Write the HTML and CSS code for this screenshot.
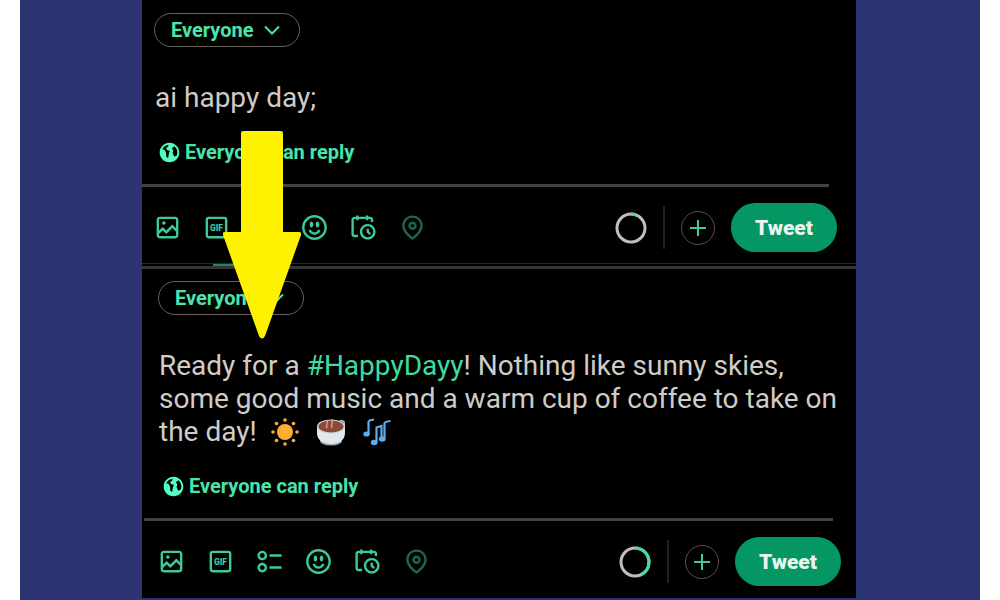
FILE: index.html
```
<!DOCTYPE html>
<html lang="en">

<head>
    <meta charset="UTF-8">
    <meta name="viewport" content="width=device-width, initial-scale=1.0">
    <title>Tweet Composer</title>
    <link rel="stylesheet" href="styles.css">
</head>

<body>

    <!-- shared icons -->
    <svg class="sprite" aria-hidden="true">
        <symbol id="icon-chevron" viewBox="0 0 16 16">
            <path d="M1 4.500l7 7 7-7" fill="none" stroke="currentColor" stroke-width="2" />
        </symbol>
        <symbol id="icon-globe" viewBox="0 0 24 24">
            <path d="M12 1.750C6.340 1.750 1.750 6.340 1.750 12S6.340 22.250 12 22.250 22.250 17.660 22.250 12 17.660 1.750 12 1.750zM11.500 12.500L10.500 18l-2-2v-3.500L7 9.500 4.500 8.500C6 5.500 8.500 4 11 3.800L10.500 6 8.700 7l.3 2 3.500 1.500zM17 16.500l-1.800-4L16 10l-1.500-2.500 2.500-2c2 1.500 3.200 3.800 3.200 6.500 0 1-.2 2-.6 3z" />
        </symbol>
        <symbol id="icon-image" viewBox="0 0 24 24">
            <path d="M3 5.500C3 4.119 4.119 3 5.500 3h13C19.881 3 21 4.119 21 5.500v13c0 1.381-1.119 2.500-2.500 2.500h-13C4.119 21 3 19.881 3 18.500v-13zM5.500 5c-.276 0-.5.224-.5.5v9.086l3-3 3 3 5-5 3 3V5.500c0-.276-.224-.5-.5-.5h-13zM19 15.414l-3-3-5 5-3-3-3 3V18.500c0 .276.224.5.5.5h13c.276 0 .5-.224.5-.5v-3.086z" />
            <circle cx="9" cy="8.300" r="1.500" />
        </symbol>
        <symbol id="icon-gif" viewBox="0 0 24 24">
            <rect x="4" y="4" width="16" height="16" rx="1.500" fill="none" stroke="currentColor" stroke-width="2" />
            <text x="12" y="14.500" text-anchor="middle" class="gif-text">GIF</text>
        </symbol>
        <symbol id="icon-poll" viewBox="0 0 24 24">
            <path d="M6 5c-1.100 0-2 .895-2 2s.9 2 2 2 2-.895 2-2-.9-2-2-2zM2 7c0-2.209 1.790-4 4-4s4 1.791 4 4-1.790 4-4 4-4-1.791-4-4zm20 1H12V6h10v2zM6 15c-1.100 0-2 .895-2 2s.9 2 2 2 2-.895 2-2-.9-2-2-2zm-4 2c0-2.209 1.790-4 4-4s4 1.791 4 4-1.790 4-4 4-4-1.791-4-4zm20 1H12v-2h10v2z" />
        </symbol>
        <symbol id="icon-emoji" viewBox="0 0 24 24">
            <path d="M8 9.500C8 8.119 8.672 7 9.500 7S11 8.119 11 9.500 10.328 12 9.500 12 8 10.881 8 9.500zm6.500 2.500c.828 0 1.500-1.119 1.500-2.500S15.328 7 14.500 7 13 8.119 13 9.500s.672 2.500 1.500 2.500zM12 16c-2.224 0-3.021-2.227-3.051-2.316l-1.897.633c.05.15 1.271 3.684 4.949 3.684s4.898-3.533 4.949-3.684l-1.896-.638c-.033.095-.83 2.322-3.053 2.322zm10.250-4.001c0 5.652-4.598 10.250-10.250 10.250S1.750 17.652 1.750 12 6.348 1.750 12 1.750 22.250 6.348 22.250 12zm-2 0c0-4.549-3.701-8.250-8.250-8.250S3.750 7.451 3.750 12s3.701 8.250 8.250 8.250 8.250-3.701 8.250-8.250z" />
        </symbol>
        <symbol id="icon-schedule" viewBox="0 0 24 24">
            <path d="M6 3V2h2v1h6V2h2v1h1.500C18.880 3 20 4.119 20 5.500v2h-2v-2c0-.276-.22-.5-.5-.5H16v1h-2V5H8v1H6V5H4.500c-.28 0-.5.224-.5.5v12c0 .276.22.5.5.5h3v2h-3C3.120 20 2 18.881 2 17.500v-12C2 4.119 3.120 3 4.500 3H6zm9.500 8c-2.490 0-4.500 2.015-4.500 4.500s2.010 4.500 4.500 4.500 4.500-2.015 4.500-4.500-2.010-4.500-4.500-4.500zM9 15.500C9 11.910 11.910 9 15.500 9s6.500 2.910 6.500 6.500-2.910 6.500-6.500 6.500S9 19.090 9 15.500zm5.500-2.500h2v2.086l1.710 1.707-1.420 1.414-2.290-2.293V13z" />
        </symbol>
        <symbol id="icon-location" viewBox="0 0 24 24">
            <path d="M12 7c-1.930 0-3.500 1.570-3.500 3.500S10.070 14 12 14s3.500-1.570 3.500-3.500S13.930 7 12 7zm0 5c-.827 0-1.500-.673-1.500-1.500S11.173 9 12 9s1.500.673 1.500 1.500S12.827 12 12 12zm0-10c-4.687 0-8.500 3.813-8.500 8.500 0 5.967 7.621 11.116 7.945 11.332l.555.37.555-.37c.324-.216 7.945-5.365 7.945-11.332C20.500 5.813 16.687 2 12 2zm0 17.770c-1.665-1.241-6.500-5.196-6.500-9.270C5.500 6.916 8.416 4 12 4s6.500 2.916 6.500 6.500c0 4.073-4.835 8.028-6.500 9.270z" />
        </symbol>
        <symbol id="icon-plus" viewBox="0 0 16 16">
            <path d="M8 0v16M0 8h16" fill="none" stroke="currentColor" stroke-width="2" />
        </symbol>
    </svg>

    <main class="stage">
        <div class="panel">

            <form class="composer">
                <button type="button" class="audience">Everyone <svg class="chevron"><use href="#icon-chevron" /></svg></button>
                <div class="tweet-text" contenteditable="true" role="textbox" aria-label="Tweet text" spellcheck="false">ai happy day;</div>
                <button type="button" class="reply"><svg class="globe"><use href="#icon-globe" /></svg>Everyone can reply</button>
                <hr class="divider">
                <div class="toolbar">
                    <button type="button" class="tool" aria-label="Media"><svg><use href="#icon-image" /></svg></button>
                    <button type="button" class="tool" aria-label="GIF"><svg><use href="#icon-gif" /></svg></button>
                    <button type="button" class="tool" aria-label="Poll"><svg><use href="#icon-poll" /></svg></button>
                    <button type="button" class="tool" aria-label="Emoji"><svg><use href="#icon-emoji" /></svg></button>
                    <button type="button" class="tool" aria-label="Schedule"><svg><use href="#icon-schedule" /></svg></button>
                    <button type="button" class="tool" aria-label="Location" disabled><svg><use href="#icon-location" /></svg></button>
                    <div class="actions">
                        <svg class="counter" viewBox="0 0 32 32">
                            <circle class="counter-track" cx="16" cy="16" r="14" />
                            <circle class="counter-value" cx="16" cy="16" r="14" pathLength="100" stroke-dasharray="6 94" />
                        </svg>
                        <span class="separator"></span>
                        <button type="button" class="add" aria-label="Add tweet"><svg><use href="#icon-plus" /></svg></button>
                        <button type="button" class="tweet">Tweet</button>
                    </div>
                </div>
            </form>

            <div class="tab-line"><span class="tab-active"></span></div>

            <form class="composer composer-result">
                <button type="button" class="audience">Everyone <svg class="chevron"><use href="#icon-chevron" /></svg></button>
                <div class="tweet-text" contenteditable="true" role="textbox" aria-label="Tweet text" spellcheck="false">Ready for a <span class="hashtag">#HappyDayy</span>! Nothing like sunny skies, some good music and a warm cup of coffee to take on the day!
                    <svg class="emoji" viewBox="0 0 28 28" role="img" aria-label="sun">
                        <circle cx="14" cy="14" r="8" fill="#ffac33" />
                        <g fill="#ffac33">
                            <circle cx="14" cy="2" r="1.800" /><circle cx="14" cy="26" r="1.800" />
                            <circle cx="2" cy="14" r="1.800" /><circle cx="26" cy="14" r="1.800" />
                            <circle cx="5.500" cy="5.500" r="1.800" /><circle cx="22.500" cy="5.500" r="1.800" />
                            <circle cx="5.500" cy="22.500" r="1.800" /><circle cx="22.500" cy="22.500" r="1.800" />
                        </g>
                    </svg>
                    <svg class="emoji" viewBox="0 0 28 28" role="img" aria-label="coffee">
                        <path d="M21 5c3-4 7-2 6.500 2S25 14 21 15" fill="none" stroke="#99aab5" stroke-width="2" />
                        <ellipse cx="14" cy="23" rx="11" ry="4.500" fill="#99aab5" />
                        <path d="M0 8v7c0 7 6 11 14 11s14-4 14-11V8z" fill="#e1e8ed" />
                        <ellipse cx="14" cy="8.500" rx="14" ry="7" fill="#ccd6dd" />
                        <ellipse cx="14" cy="8.500" rx="12.500" ry="6" fill="#8a4b38" />
                        <path d="M10 10c-2-3 2-4 0-8M15 10c-2-4 2-5 0-9" fill="none" stroke="#d99e82" stroke-width="1.500" />
                    </svg>
                    <svg class="emoji" viewBox="0 0 28 28" role="img" aria-label="music notes">
                        <g fill="none" stroke="#5dadec" stroke-width="2.200">
                            <path d="M5.500 16V3.500c1-1.500 3-1.500 5.500-2" />
                            <path d="M13.500 24V9.500l5-1.500v12" />
                            <path d="M21.500 21V5c1-1.500 3-1.500 6-2" />
                        </g>
                        <g fill="#5dadec">
                            <ellipse cx="3.500" cy="16" rx="3.200" ry="2.600" />
                            <ellipse cx="11.200" cy="24.500" rx="3.400" ry="2.700" />
                            <ellipse cx="19.200" cy="21" rx="3.400" ry="2.700" />
                        </g>
                    </svg>
                </div>
                <button type="button" class="reply"><svg class="globe"><use href="#icon-globe" /></svg>Everyone can reply</button>
                <hr class="divider">
                <div class="toolbar">
                    <button type="button" class="tool" aria-label="Media"><svg><use href="#icon-image" /></svg></button>
                    <button type="button" class="tool" aria-label="GIF"><svg><use href="#icon-gif" /></svg></button>
                    <button type="button" class="tool" aria-label="Poll"><svg><use href="#icon-poll" /></svg></button>
                    <button type="button" class="tool" aria-label="Emoji"><svg><use href="#icon-emoji" /></svg></button>
                    <button type="button" class="tool" aria-label="Schedule"><svg><use href="#icon-schedule" /></svg></button>
                    <button type="button" class="tool" aria-label="Location" disabled><svg><use href="#icon-location" /></svg></button>
                    <div class="actions">
                        <svg class="counter" viewBox="0 0 32 32">
                            <circle class="counter-track" cx="16" cy="16" r="14" />
                            <circle class="counter-value" cx="16" cy="16" r="14" pathLength="100" stroke-dasharray="43 57" />
                        </svg>
                        <span class="separator"></span>
                        <button type="button" class="add" aria-label="Add tweet"><svg><use href="#icon-plus" /></svg></button>
                        <button type="button" class="tweet">Tweet</button>
                    </div>
                </div>
            </form>

            <!-- arrow from the prompt to the generated tweet -->
            <svg class="arrow" viewBox="0 0 78 208" aria-hidden="true">
                <path d="M20 0h38q2 0 2 2v99h16q3 0 2 3L42 205q-3 5-6 0L0 104q-1-3 2-3h16V2q0-2 2-2z" fill="#fff200" />
            </svg>
        </div>
    </main>

</body>

</html>
```
FILE: styles.css
```
body {
    font-family: Roboto, Arial, sans-serif;
    background-color: #ffffff;
    margin: 0;
    padding: 0 20px;
}

button {
    font-family: inherit;
    background: none;
    border: none;
    padding: 0;
    cursor: pointer;
}

.sprite {
    display: none;
}

.stage {
    background-color: #2c3473;
    min-height: 100vh;
    box-sizing: border-box;
    padding: 0 124px 2px 122px;
}

.panel {
    position: relative;
    background-color: #000000;
}

.composer {
    display: flex;
    flex-direction: column;
    align-items: flex-start;
    padding: 13px 0 11px;
}

.composer-result {
    border-top: 3px solid #37352f;
    padding: 12px 0 12px 4px;
}

.audience {
    display: flex;
    align-items: center;
    gap: 10px;
    height: 34px;
    margin-left: 12px;
    padding: 0 19px 0 16px;
    border: 1px solid #68625b;
    border-radius: 17px;
    color: #4be3ac;
    font-size: 20px;
    font-weight: 700;
}

.chevron {
    width: 16px;
    height: 16px;
}

.tweet-text {
    margin: 34px 12px 26px 13px;
    color: #cfccc8;
    font-size: 28px;
    line-height: 33px;
    outline: none;
}

.hashtag {
    color: #3fdba2;
}

.emoji {
    width: 28px;
    height: 28px;
    margin: 0 4px 0 7px;
    vertical-align: -5px;
}

.reply {
    display: flex;
    align-items: center;
    gap: 4px;
    margin-left: 16px;
    color: #4be3ac;
    font-size: 20px;
    font-weight: 700;
    line-height: 24px;
}

.globe {
    width: 23px;
    height: 23px;
    fill: #52ffc0;
}

.divider {
    align-self: stretch;
    height: 3px;
    margin: 20px 27px 16px 0;
    border: none;
    background-color: #46423b;
}

.composer-result .divider {
    margin-left: -2px;
    margin-right: 23px;
}

.toolbar {
    display: flex;
    align-self: stretch;
    align-items: center;
    gap: 20px;
    padding: 0 19px 0 11px;
}

.composer-result .toolbar {
    padding-right: 15px;
}

.tool,
.tool svg {
    display: block;
    width: 29px;
    height: 29px;
    fill: currentColor;
}

.tool {
    color: #3ccb98;
}

.tool:disabled {
    opacity: 0.5;
}

.gif-text {
    font-size: 7px;
    font-weight: 900;
}

.actions {
    display: flex;
    align-items: center;
    gap: 16px;
    margin-left: auto;
}

.counter {
    width: 32px;
    height: 32px;
    fill: none;
    stroke-width: 3;
    transform: rotate(-90deg);
}

.counter-track {
    stroke: #c4bcb8;
}

.counter-value {
    stroke: #42dca5;
}

.separator {
    width: 2px;
    height: 43px;
    background-color: #22211f;
}

.add {
    display: flex;
    align-items: center;
    justify-content: center;
    width: 34px;
    height: 34px;
    border: 1px solid #5b504a;
    border-radius: 50%;
    color: #3ccb98;
}

.add svg {
    width: 16px;
    height: 16px;
}

.tweet {
    height: 49px;
    padding: 0 24px;
    border-radius: 25px;
    background-color: #049764;
    color: #e8f5ef;
    font-size: 21px;
    font-weight: 900;
}

.tab-line {
    height: 3px;
    box-sizing: border-box;
    border-top: 1px solid #2c2a27;
}

.tab-active {
    display: block;
    width: 40px;
    height: 2px;
    margin-left: 71px;
    background-color: #1d8a66;
}

/* lies over both composers */
.arrow {
    position: absolute;
    top: 131px;
    left: 81px;
    width: 78px;
    height: 208px;
    pointer-events: none;
}
```
